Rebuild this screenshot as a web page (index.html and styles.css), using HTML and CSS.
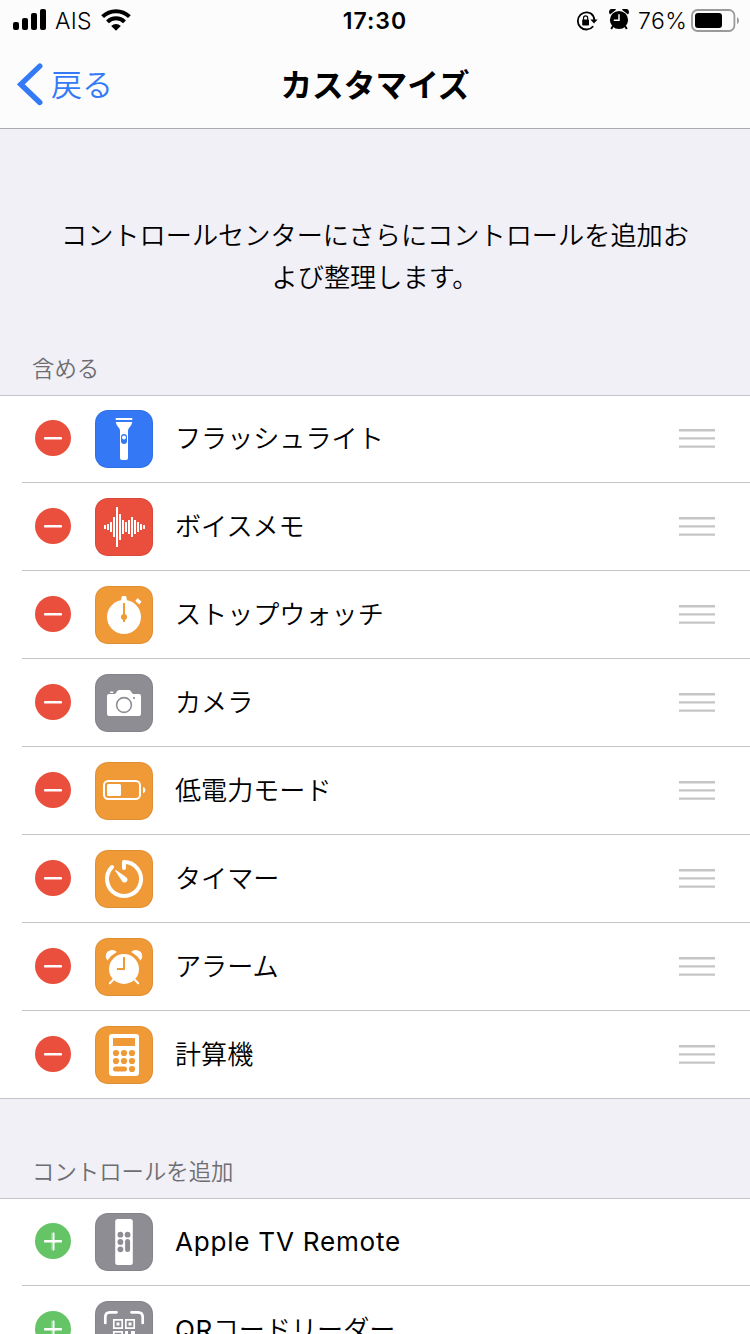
FILE: index.html
```html
<!DOCTYPE html>
<html lang="ja">
<head>
<meta charset="utf-8">
<title>カスタマイズ</title>
<link rel="stylesheet" href="styles.css">
</head>
<body>
<div class="screen">
  <header class="top">
    <div class="status">
      <div class="status-left">
        <svg class="signal" width="33" height="22" viewBox="0 0 33 22"><rect x="0" y="13" width="6" height="8" rx="2"/><rect x="9" y="9" width="6" height="12" rx="2"/><rect x="18" y="4" width="6" height="17" rx="2"/><rect x="27" y="0" width="6" height="21" rx="2"/></svg>
        <span class="carrier">AIS</span>
        <svg class="wifi" width="30" height="22" viewBox="0 0 30 22"><g fill="none" stroke="#000" stroke-width="4"><path d="M1.6 7.6A19.2 19.2 0 0 1 28.4 7.6"/><path d="M6.5 12.9A12 12 0 0 1 23.5 12.9"/></g><path d="M10.2 17.1A6.8 6.8 0 0 1 19.8 17.1L15 21.8Z"/></svg>
      </div>
      <span class="clock">17:30</span>
      <div class="status-right">
        <svg class="lock" width="22" height="20" viewBox="0 0 22 20"><path d="M17.2 4.6A8.6 8.6 0 1 0 17.2 15.2M15 2.5A8.6 8.6 0 0 1 18.3 9" fill="none" stroke="#000" stroke-width="1.8"/><path d="M14.3 8.5H21.6L18 12.6Z"/><rect x="6.2" y="8.5" width="6.8" height="6" rx=".8"/><path d="M7.5 9V6.9a2.1 2.1 0 0 1 4.2 0V9" fill="none" stroke="#000" stroke-width="1.2"/></svg>
        <svg class="alarm" width="20" height="21" viewBox="0 0 20 21"><circle cx="10" cy="11" r="9.1"/><path d="M1 5.4A3.6 3.6 0 0 1 7 .8Z M19 5.4A3.6 3.6 0 0 0 13 .8Z"/><path d="M4 17L2.2 20M16 17L17.8 20" stroke="#000" stroke-width="2"/><path d="M10 5.3V11.3H4.8" fill="none" stroke="#fff" stroke-width="1.5"/></svg>
        <span class="percent">76%</span>
        <svg class="battery" width="49" height="24" viewBox="0 0 49 24"><rect x="1" y="1" width="42.4" height="21" rx="5.5" fill="none" stroke="#9a9a9b" stroke-width="1.8"/><rect x="4" y="4" width="27" height="15" rx="3"/><path d="M46 8q2 1 2 3.5T46 15Z" fill="#9a9a9b"/></svg>
      </div>
    </div>
    <nav class="nav">
      <a class="back"><svg width="26" height="43" viewBox="0 0 26 43"><path d="M22.8 3.1L3.8 21.3L22.8 39.5" fill="none" stroke="#347af6" stroke-width="5.4" stroke-linecap="round" stroke-linejoin="miter"/></svg><span>戻る</span></a>
      <h1 class="title">カスタマイズ</h1>
    </nav>
  </header>
  <p class="intro">コントロールセンターにさらにコントロールを追加お<br>よび整理します。</p>
  <h2 class="heading">含める</h2>
  <ul class="list">
    <li class="row"><span class="toggle remove"></span>
      <svg class="icon blue" viewBox="0 0 58 58"><rect x="20.7" y="8" width="16.6" height="2"/><path d="M20.7 12H37.3Q37 15 34 18Q33 19 33 21V48Q33 50 31 50H27Q25 50 25 48V21Q25 19 24 18Q21 15 20.7 12Z"/><rect class="cut" x="26" y="24" width="6" height="10" rx="3"/><circle cx="29" cy="27.5" r="2"/></svg>
      <span class="label">フラッシュライト</span><svg class="grip" viewBox="0 0 36 20"><path d="M0 2.2H36M0 10.4H36M0 18.6H36"/></svg></li>
    <li class="row"><span class="toggle remove"></span>
      <svg class="icon red" viewBox="0 0 58 58"><path d="M9 27h2v4h-2zM12 26h2v6h-2zM15 24h2v10h-2zM18 19h2v20h-2zM21 9h2v40h-2zM24 16h2v26h-2zM27 22h2v14h-2zM30 24h2v10h-2zM33 22h2v14h-2zM36 19h2v20h-2zM39 22h2v14h-2zM42 24h2v10h-2zM45 26h2v6h-2zM48 27h2v4h-2z"/></svg>
      <span class="label">ボイスメモ</span><svg class="grip" viewBox="0 0 36 20"><path d="M0 2.2H36M0 10.4H36M0 18.6H36"/></svg></li>
    <li class="row"><span class="toggle remove"></span>
      <svg class="icon orange" viewBox="0 0 58 58"><circle cx="29" cy="31" r="17"/><path d="M26 15L26.6 11Q26.8 10 27.6 10H30.4Q31.2 10 31.4 11L32 15Z"/><rect x="40.7" y="13.5" width="5.4" height="3.6" rx=".6" transform="rotate(42 43.4 15.3)"/><path class="cut" d="M28 17.5q1-1.5 2 0V36h-2z"/><circle class="cut" cx="29" cy="31" r="3"/></svg>
      <span class="label">ストップウォッチ</span><svg class="grip" viewBox="0 0 36 20"><path d="M0 2.2H36M0 10.4H36M0 18.6H36"/></svg></li>
    <li class="row"><span class="toggle remove"></span>
      <svg class="icon gray" viewBox="0 0 58 58"><path d="M14 20H19.5Q20.5 20 21.3 18.5Q22.3 16 24 16H34Q35.7 16 36.7 18.5Q37.5 20 38.5 20H44Q46 20 46 22V40Q46 42 44 42H14Q12 42 12 40V22Q12 20 14 20Z"/><rect x="15" y="17.4" width="3.4" height="1.6" rx=".7"/><circle class="cut-line" cx="29" cy="31" r="7.4"/><circle class="cut" cx="39" cy="24" r="1.1"/></svg>
      <span class="label">カメラ</span><svg class="grip" viewBox="0 0 36 20"><path d="M0 2.2H36M0 10.4H36M0 18.6H36"/></svg></li>
    <li class="row"><span class="toggle remove"></span>
      <svg class="icon orange" viewBox="0 0 58 58"><rect class="line" x="9" y="19" width="36" height="18" rx="4.2" stroke-width="2"/><rect x="12" y="22" width="14" height="12" rx="1.5"/><path d="M48 25Q50.5 25.5 50.5 28T48 31.5Z"/></svg>
      <span class="label">低電力モード</span><svg class="grip" viewBox="0 0 36 20"><path d="M0 2.2H36M0 10.4H36M0 18.6H36"/></svg></li>
    <li class="row"><span class="toggle remove"></span>
      <svg class="icon orange" viewBox="0 0 58 58"><path class="line" d="M29 18V12A17 17 0 1 1 17 17" stroke-width="4" stroke-linecap="round" stroke-linejoin="round"/><path d="M20 20.6Q20 19.8 20.9 20.1L30.9 26.9A3 3 0 1 1 26.8 30.8Z"/></svg>
      <span class="label">タイマー</span><svg class="grip" viewBox="0 0 36 20"><path d="M0 2.2H36M0 10.4H36M0 18.6H36"/></svg></li>
    <li class="row"><span class="toggle remove"></span>
      <svg class="icon orange" viewBox="0 0 58 58"><circle cx="29" cy="31" r="15"/><path d="M12.4 22.6A6.3 6.3 0 0 1 21.8 14Q16 17 12.4 22.6ZM45.6 22.6A6.3 6.3 0 0 0 36.2 14Q42 17 45.6 22.6Z"/><path class="line" d="M18.5 41.5L14.8 45.2M39.5 41.5L43.2 45.2" stroke-width="2" stroke-linecap="round"/><path class="cut-line thick" d="M29 19V31H22"/></svg>
      <span class="label">アラーム</span><svg class="grip" viewBox="0 0 36 20"><path d="M0 2.2H36M0 10.4H36M0 18.6H36"/></svg></li>
    <li class="row last"><span class="toggle remove"></span>
      <svg class="icon orange" viewBox="0 0 58 58"><rect x="14" y="8" width="30" height="42" rx="3"/><g class="cut"><rect x="18" y="12" width="22" height="8" rx=".6"/><circle cx="21" cy="27" r="3.1"/><circle cx="29" cy="27" r="3.1"/><circle cx="37" cy="27" r="3.1"/><circle cx="21" cy="35" r="3.1"/><circle cx="29" cy="35" r="3.1"/><circle cx="37" cy="35" r="3.1"/><rect x="18" y="40.5" width="14" height="5" rx="2.5"/><circle cx="37" cy="43" r="3.1"/></g></svg>
      <span class="label">計算機</span><svg class="grip" viewBox="0 0 36 20"><path d="M0 2.2H36M0 10.4H36M0 18.6H36"/></svg></li>
  </ul>
  <h2 class="heading second">コントロールを追加</h2>
  <ul class="list">
    <li class="row"><span class="toggle add"></span>
      <svg class="icon gray" viewBox="0 0 58 58"><rect x="20.2" y="6" width="17.6" height="46" rx="2.5"/><g class="cut"><circle cx="25.4" cy="21.7" r="2.9"/><circle cx="32.6" cy="21.7" r="2.9"/><circle cx="25.4" cy="29" r="2.9"/><circle cx="25.4" cy="36.3" r="2.9"/><rect x="30.1" y="26" width="5" height="13" rx="2.5"/></g></svg>
      <span class="label latin">Apple TV Remote</span></li>
    <li class="row"><span class="toggle add"></span>
      <svg class="icon gray" viewBox="0 0 58 58"><path class="line" d="M10.3 22V16Q10.3 11.3 15 11.3H21.5M47.7 22V16Q47.7 11.3 43 11.3H36.5M10.3 36V42Q10.3 46.7 15 46.7H21.5M47.7 36V42Q47.7 46.7 43 46.7H36.5" stroke-width="2.7" stroke-linecap="round"/><path class="line" d="M18.8 18.8h8.4v8.4h-8.4zM30.8 18.8h8.4v8.4h-8.4zM18.8 30.8h8.4v8.4h-8.4z" stroke-width="1.7"/><path d="M21.5 21.5h3v3h-3zM33.5 21.5h3v3h-3zM21.5 33.5h3v3h-3zM30 30h3v3h-3zM36 30h4v3h-2v3h-2zM32 34h3v6h-3z"/></svg>
      <span class="label"><span class="qr">QR</span>コードリーダー</span></li>
  </ul>
</div>
</body>
</html>
```

FILE: styles.css
```css
* { box-sizing: border-box; }
body { margin: 0; background: #f1f0f6; color: #000; font-family: Inter, "Noto Sans CJK JP", sans-serif; overflow: hidden; }
.screen { width: 750px; height: 1334px; overflow: hidden; }
.top { height: 129px; background: #fcfcfc; border-bottom: 1px solid #a9a9ae; }
.status { height: 40px; display: grid; grid-template-columns: 1fr auto 1fr; align-items: center; font-size: 23px; line-height: 40px; }
.status svg { display: block; flex: none; }
.status-left, .status-right { display: flex; align-items: center; }
.status-left { padding-left: 13px; }
.signal { margin-top: -2px; }
.carrier { width: 37px; margin: 1px 0 0 9px; font-weight: 350; letter-spacing: .2px; }
.wifi { margin: -1px 0 0 9px; }
.clock { font-weight: 600; letter-spacing: 1px; margin: 1px 0 0; }
.status-right { justify-content: flex-end; padding-right: 10px; }
.alarm { margin: 0 9px 2px 11px; }
.percent { width: 49px; font-weight: 350; letter-spacing: .5px; margin: 1px 4px 0 0; }
.battery { margin-top: 0; }
.nav { height: 88px; display: grid; grid-template-columns: 1fr auto 1fr; align-items: center; }
.back { display: flex; align-items: center; padding-left: 17px; gap: 8px; color: #347af6; font: 350 31px/44px "Noto Sans CJK JP", sans-serif; }
.back svg { display: block; margin-top: 1px; }
.back span { margin-top: -3px; }
.title { margin: -3px 0 0; font: 700 31.7px/44px "Noto Sans CJK JP", sans-serif; }
.intro { margin: 0; padding: 84px 40px 0; height: 223px; text-align: center; font: 350 26.2px/42px "Noto Sans CJK JP", sans-serif; }
.heading { margin: 0; height: 43px; padding-left: 32px; font: 350 22.4px/30px "Noto Sans CJK JP", sans-serif; color: #6d6d72; }
.second { height: 99px; padding-top: 56px; }
.list { margin: 0; padding: 0; list-style: none; background: #fff; box-shadow: inset 0 1px #c4c4c8; }
.row { height: 88px; display: flex; align-items: flex-start; padding: 15px 35px 0; background: linear-gradient(#c4c4c8, #c4c4c8) 22px 100% / 100% 1px no-repeat; }
.row.last { background-position-x: 0; }
.toggle { width: 36px; height: 36px; flex: none; margin-top: 10px; border-radius: 50%; display: grid; place-items: center; }
.toggle::before, .toggle::after { content: ""; grid-area: 1 / 1; width: 18px; height: 3px; border-radius: 1px; background: linear-gradient(#fff 2px, rgba(255, 255, 255, .5) 2px); }
.remove { background: #ea4e3d; }
.remove::after { display: none; }
.add { background: #65c466; }
.add::after { transform: rotate(90deg); }
.icon { width: 58px; height: 58px; flex: none; margin-left: 24px; border-radius: 13px; background: var(--tile); box-shadow: inset 0 0 0 1px rgba(0, 0, 0, .07); fill: #fff; }
.blue { --tile: #3478f6; }
.red { --tile: #ea4e3d; }
.orange { --tile: #f09a37; }
.gray { --tile: #8e8d93; }
.cut { fill: var(--tile); }
.cut-line { fill: none; stroke: var(--tile); stroke-width: 1.6; }
.cut-line.thick { stroke-width: 2; }
.line { fill: none; stroke: #fff; }
.label { flex: 1; margin-left: 22px; font: 350 26.1px/55px "Noto Sans CJK JP", sans-serif; white-space: nowrap; }
.latin, .qr { font-family: Inter, sans-serif; font-weight: 400; }
.latin { line-height: 57px; letter-spacing: .75px; }
.qr { letter-spacing: .5px; }
.grip { width: 36px; height: 20px; flex: none; margin-top: 18px; fill: none; stroke: #c5c5c7; stroke-width: 2.4; }
```
